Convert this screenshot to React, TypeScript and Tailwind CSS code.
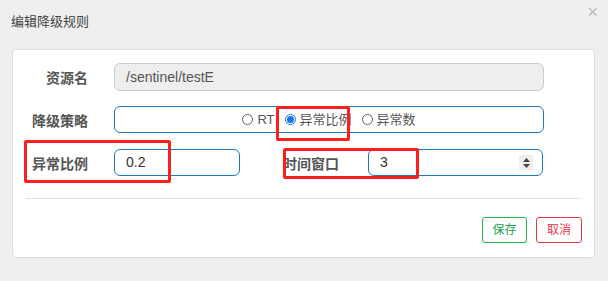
import React from 'react';

function Radio({ checked, label }: { checked?: boolean; label: string }) {
    return (
        <label className="flex items-center gap-[4px]">
            {checked ? (
                <span className="w-[11px] h-[11px] rounded-full border border-[#1a73e8] flex items-center justify-center">
                    <span className="w-[7px] h-[7px] rounded-full bg-[#1a73e8]" />
                </span>
            ) : (
                <span className="w-[11px] h-[11px] rounded-full border border-[#666]" />
            )}
            <span>{label}</span>
        </label>
    );
}

export default function App() {
    return (
        <div
            className="w-[608px] h-[281px] bg-[#efefef] relative overflow-hidden"
            style={{ fontFamily: '"Liberation Sans", "Noto Sans CJK SC", sans-serif' }}
        >
            {/* header */}
            <div className="h-[49px] flex items-start justify-between pl-[11px] pr-[10px]">
                <h4 className="mt-[13px] text-[13px] text-[#444] leading-[18px]">编辑降级规则</h4>
                <span className="mt-[3px] text-[18px] leading-[18px] text-[#b8b8b8]">×</span>
            </div>

            {/* form panel */}
            <div className="relative ml-[12px] w-[583px] h-[209px] bg-white border border-[#ddd] rounded-[4px] pt-[13px]">
                <div className="flex items-center h-[28px]">
                    <div className="w-[75px] pt-[3px] text-right text-[14px] font-bold text-[#555]">资源名</div>
                    <div className="ml-[26px] w-[430px] h-[28px] rounded-[6px] border border-[#ccc] bg-[#eee] px-[11px] flex items-center text-[14px] text-[#555]">
                        /sentinel/testE
                    </div>
                </div>

                <div className="flex items-center h-[27px] mt-[15px]">
                    <div className="w-[75px] pt-[3px] text-right text-[14px] font-bold text-[#555]">降级策略</div>
                    <div className="ml-[26px] w-[430px] h-[27px] rounded-[6px] border border-[#1b7bbd] flex items-center justify-center gap-[10px] text-[13px] text-[#555]">
                        <Radio label="RT" />
                        <Radio checked label="异常比例" />
                        <Radio label="异常数" />
                    </div>
                </div>

                <div className="flex items-center h-[27px] mt-[16px]">
                    <div className="w-[75px] pt-[3px] text-right text-[14px] font-bold text-[#555]">异常比例</div>
                    <div className="ml-[26px] w-[126px] h-[27px] rounded-[6px] border border-[#1b7bbd] px-[11px] flex items-center text-[14px] text-[#333]">
                        0.2
                    </div>
                    <div className="ml-[43px] w-[60px] pt-[3px] text-[14px] font-bold text-[#555]">时间窗口</div>
                    <div className="ml-[25px] w-[175px] h-[27px] rounded-[6px] border border-[#1b7bbd] pl-[11px] pr-[9px] flex items-center justify-between text-[14px] text-[#333]">
                        <span>3</span>
                        <span className="w-[14px] h-[15px] bg-[#eee] flex flex-col items-center justify-center gap-[2px]">
                            <svg width="7" height="4" viewBox="0 0 7 4"><path d="M0 4 L3.5 0 L7 4 Z" fill="#444" /></svg>
                            <svg width="7" height="4" viewBox="0 0 7 4"><path d="M0 0 L3.5 4 L7 0 Z" fill="#444" /></svg>
                        </span>
                    </div>
                </div>

                <div className="mx-[13px] mt-[22px] h-px bg-[#e2e2e2]" />

                <div className="flex justify-end gap-[9px] mr-[12px] mt-[18px]">
                    <button className="w-[45px] h-[26px] rounded-[3px] border border-[#22b24c] text-[12px] text-[#22a04a]">保存</button>
                    <button className="w-[46px] h-[26px] rounded-[3px] border border-[#f0334b] text-[12px] text-[#f0334b]">取消</button>
                </div>

                {/* red annotation boxes */}
                <div className="absolute left-[263px] top-[56px] w-[74px] h-[35px] border-[3px] border-[#ff1e1e] rounded-[2px] pointer-events-none" />
                <div className="absolute left-[11px] top-[90px] w-[147px] h-[43px] border-[3px] border-[#ff1e1e] rounded-[2px] pointer-events-none" />
                <div className="absolute left-[270px] top-[98px] w-[136px] h-[31px] border-[3px] border-[#ff1e1e] rounded-[2px] pointer-events-none" />
            </div>
        </div>
    );
}
